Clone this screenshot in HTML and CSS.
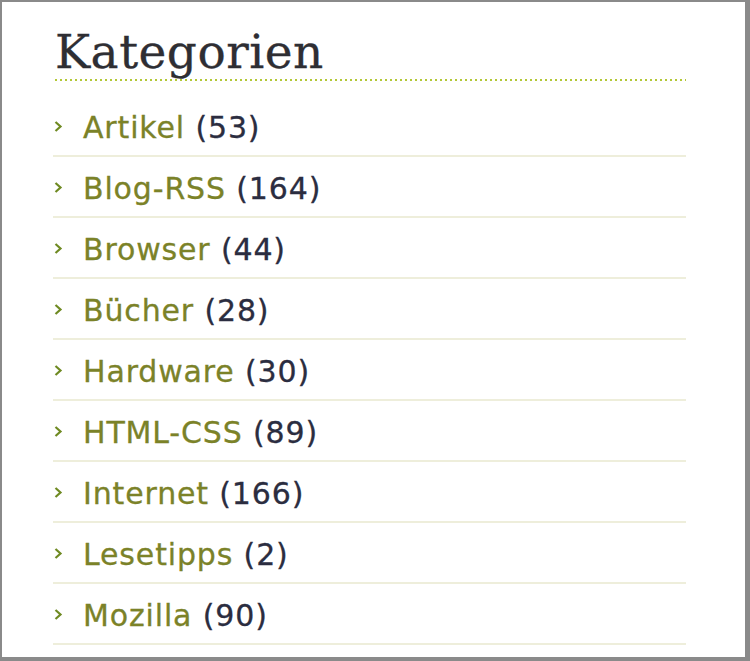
FILE: index.html
```html
<!DOCTYPE html>
<html>
<head>
  <meta charset="utf-8">
  <title>Kategorien</title>
  <link rel="stylesheet" href="styles.css">
</head>
<body>
  <div class="widget">
    <h2 class="widget-title">Kategorien</h2>
    <ul class="cat-list">
      <li><svg class="arrow" width="9" height="11" viewBox="0 0 9 11"><polyline points="1.5,1 6.5,5.5 1.5,10" /></svg><a href="#">Artikel</a> (53)</li>
      <li><svg class="arrow" width="9" height="11" viewBox="0 0 9 11"><polyline points="1.5,1 6.5,5.5 1.5,10" /></svg><a href="#">Blog-RSS</a> (164)</li>
      <li><svg class="arrow" width="9" height="11" viewBox="0 0 9 11"><polyline points="1.5,1 6.5,5.5 1.5,10" /></svg><a href="#">Browser</a> (44)</li>
      <li><svg class="arrow" width="9" height="11" viewBox="0 0 9 11"><polyline points="1.5,1 6.5,5.5 1.5,10" /></svg><a href="#">Bücher</a> (28)</li>
      <li><svg class="arrow" width="9" height="11" viewBox="0 0 9 11"><polyline points="1.5,1 6.5,5.5 1.5,10" /></svg><a href="#">Hardware</a> (30)</li>
      <li><svg class="arrow" width="9" height="11" viewBox="0 0 9 11"><polyline points="1.5,1 6.5,5.5 1.5,10" /></svg><a href="#">HTML-CSS</a> (89)</li>
      <li><svg class="arrow" width="9" height="11" viewBox="0 0 9 11"><polyline points="1.5,1 6.5,5.5 1.5,10" /></svg><a href="#">Internet</a> (166)</li>
      <li><svg class="arrow" width="9" height="11" viewBox="0 0 9 11"><polyline points="1.5,1 6.5,5.5 1.5,10" /></svg><a href="#">Lesetipps</a> (2)</li>
      <li><svg class="arrow" width="9" height="11" viewBox="0 0 9 11"><polyline points="1.5,1 6.5,5.5 1.5,10" /></svg><a href="#">Mozilla</a> (90)</li>
    </ul>
  </div>
</body>
</html>
```

FILE: styles.css
```css
html, body {
  margin: 0;
  padding: 0;
  background: #fff;
}
.widget {
  box-sizing: border-box;
  width: 750px;
  height: 661px;
  overflow: hidden;
  border-style: solid;
  border-color: #8a8a8a;
  border-width: 2px 5px 4px 2px;
  padding: 23px 59px 0 51px;
  background: #fff;
}
.widget-title {
  margin: 0;
  padding: 0 0 2px 2px;
  font-family: "DejaVu Serif", Georgia, serif;
  font-weight: normal;
  font-size: 47px;
  line-height: 54px;
  letter-spacing: 0.5px;
  color: #2e2e33;
  -webkit-text-stroke: 0.3px #2e2e33;
  background-image: linear-gradient(to right, #b3c835 2px, transparent 2px);
  background-size: 5px 2px;
  background-repeat: repeat-x;
  background-position: 2px bottom;
}
.cat-list {
  list-style: none;
  margin: 15px 0 0 0;
  padding: 0;
}
.cat-list li {
  padding: 14px 0 9px 0;
  border-bottom: 2px solid #eeeedb;
  font-family: "DejaVu Sans", Verdana, sans-serif;
  font-size: 30px;
  line-height: 36px;
  letter-spacing: 0.85px;
  color: #2b2d40;
  -webkit-text-stroke: 0.3px currentColor;
  white-space: nowrap;
}
.cat-list a {
  color: #7b8228;
  text-decoration: none;
}
.arrow {
  vertical-align: 6px;
  margin: 0 20px 0 1px;
}
.arrow polyline {
  fill: none;
  stroke: #6f8a22;
  stroke-width: 2.2;
}
```
